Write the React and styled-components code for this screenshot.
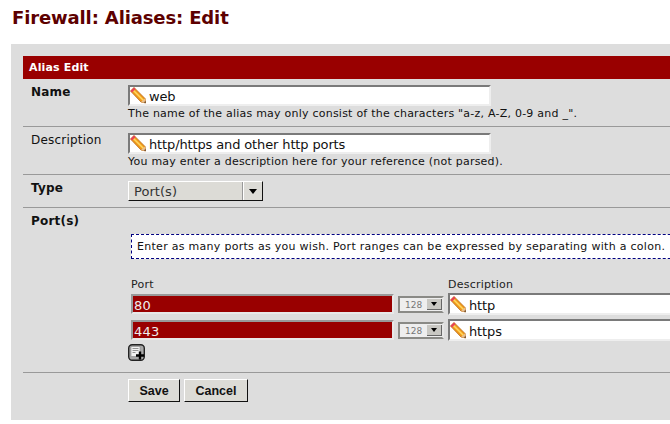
import React from "react";
import styled, { createGlobalStyle } from "styled-components";

const Global = createGlobalStyle`
  html, body { margin: 0; padding: 0; background: #fff; overflow: hidden; }
  body { font-family: "DejaVu Sans", sans-serif; color: #111; }
`;
const Page = styled.div`width: 670px; height: 424px; overflow: hidden; display: flex; flex-direction: column;`;
const Title = styled.h1`
  margin: 0; height: 44px; padding: 7px 0 0 12px; box-sizing: border-box;
  font-size: 18px; line-height: 22px; font-weight: 700; color: #5d0000; white-space: nowrap; letter-spacing: -0.13px;
`;
const Panel = styled.section`
  margin-left: 11px; width: 659px; height: 376px; box-sizing: border-box;
  background: #ddd; padding: 12px 0 0 12px; overflow: hidden;
`;
const Bar = styled.div`
  height: 23px; background: #990000; color: #fff; font-size: 11px; font-weight: 700;
  line-height: 23px; padding-left: 6px; letter-spacing: 0.15px;
`;
const Row = styled.div`
  display: flex; height: ${p => p.$h}px; box-sizing: border-box;
  border-bottom: 1px solid #999;
`;
const Label = styled.div`
  width: 105px; flex: none; box-sizing: border-box; padding: ${p => p.$top}px 0 0 8px;
  font-size: 12px; line-height: 14px; font-weight: ${p => (p.$bold ? 700 : 400)}; color: #111;
  letter-spacing: 0.2px;
`;
const Value = styled.div`
  flex: 1; min-width: 0; padding-top: ${p => p.$top}px; display: flex; flex-direction: column; align-items: flex-start;
`;
const TextBox = styled.div`
  width: ${p => p.$w}px; height: ${p => p.$h || 21}px; box-sizing: border-box; flex: none; background: #fff;
  border-style: solid; border-width: 2px;
  border-color: #7a7a7a #eee #eee #7a7a7a; display: flex; align-items: center;
  font-size: 13px; line-height: 19px; color: #111; white-space: nowrap; overflow: hidden; letter-spacing: -0.13px;
`;
const InputText = styled.span`position: relative; top: 1px;`;
const Hint = styled.div`font-size: 11px; line-height: 13px; color: #111; white-space: nowrap; margin-top: 1px; letter-spacing: 0.23px;`;
const Select = styled.div`
  width: 135px; height: 20px; box-sizing: border-box; background: #dcdbd6;
  border-style: solid; border-width: 1px; border-color: #fff #111 #111 #fff;
  display: flex; align-items: center; font-size: 13px; color: #333; padding-left: 5px;
`;
const SelectText = styled.span`flex: 1; letter-spacing: 0.05px;`;
const SelectArrow = styled.span`
  width: 19px; height: 100%; box-sizing: border-box; border-left: 1px solid #fff;
  box-shadow: -1px 0 0 #999; display: flex; align-items: center; justify-content: center;
`;
const Tri = styled.i`
  display: block; width: 0; height: 0; border-left: 4px solid transparent; border-right: 4px solid transparent;
  border-top: 5px solid #000;
`;
const Notice = styled.div`
  margin: 26px 0 0 3px; width: 620px; height: 25px; box-sizing: border-box; flex: none;
  background: #fff; border: 1px dashed #000080; border-right: none;
  padding-left: 5px; font-size: 11px; line-height: 23px; color: #111; white-space: nowrap; letter-spacing: 0.285px;
`;
const PortGrid = styled.div`
  margin: 19px 0 0 3px; display: grid; grid-template-columns: 263px 46px 300px; column-gap: 4px; row-gap: 4px;
  align-items: center; width: 640px; flex: none;
`;
const ColHead = styled.div`font-size: 11px; line-height: 13px; color: #222; height: 11px; grid-column: ${p => p.$col}; letter-spacing: 0.22px;`;
const RedInput = styled.div`
  height: 20px; box-sizing: border-box; background: #990000; color: #eee;
  border-style: solid; border-width: 2px; border-color: #999 #e8e8e8 #e8e8e8 #999;
  font-size: 13px; line-height: 19px; padding-left: 1px; letter-spacing: 0.2px;
`;
const MiniSelect = styled.div`
  height: 17px; box-sizing: border-box; background: #eee; border-style: solid; border-width: 2px;
  border-color: #8a8a86 #e6e6e6 #8a8a86 #8a8a86; margin-top: 1px;
  display: flex; align-items: center; font-size: 9px; color: #777; padding-left: 5px; justify-content: space-between;
`;
const MiniArrow = styled.span`
  width: 15px; height: 11px; background: #c9c8c3; display: flex; align-items: center; justify-content: center;
  border-right: 1px solid #666; border-bottom: 1px solid #666; box-sizing: border-box;
`;
const SmallTri = styled(Tri)`border-left-width: 3px; border-right-width: 3px; border-top-width: 4px;`;
const AddButton = styled.button`
  display: block; width: 17px; height: 17px; padding: 0; margin: 3px 0 0 0; border: none; background: none; flex: none;
`;
const Actions = styled.div`display: flex; gap: 4px; padding: 6px 0 0 105px;`;
const Btn = styled.button`
  height: 23px; width: ${p => p.$w}px; box-sizing: border-box; background: #dcdbd6; padding: 0;
  border-style: solid; border-width: 1px; border-color: #fff #111 #111 #fff;
  font-family: "Liberation Sans", sans-serif; font-weight: 700; font-size: 12.5px; color: #111;
`;

const Pencil = () => (
  <svg width="16" height="17" viewBox="0 0 16 17" style={{ flex: "none", marginRight: 3 }}>
    <path d="M0.5 4 L4 0.5 L15 11.5 L15.8 16 L11 15 Z" fill="#f09a1a" stroke="#b86a1c" strokeWidth="0.8" />
    <path d="M3 3 L13.5 13.5" stroke="#ffd860" strokeWidth="1.6" />
    <path d="M0.5 4 L4 0.5 L5.5 2 L2 5.5 Z" fill="#e8405a" />
    <path d="M11 15 L15 11.5 L15.8 16 Z" fill="#e8c090" />
    <path d="M14 15.6 L15.8 16 L15.4 14 Z" fill="#4a2a10" />
  </svg>
);
const AddIcon = () => (
  <svg width="17" height="17" viewBox="0 0 17 17">
    <rect x="0.7" y="0.7" width="15.6" height="15.6" rx="3.5" fill="#a8a8a8" stroke="#222" strokeWidth="1.4" />
    <rect x="3" y="2.5" width="9" height="10" fill="#f2f2f2" stroke="#888" strokeWidth="0.6" />
    <path d="M4.5 4.5h6M4.5 6.5h6M4.5 8.5h3" stroke="#888" strokeWidth="0.9" />
    <path d="M12 7.5v8M8 11.5h8" stroke="#000" strokeWidth="2.4" />
  </svg>
);
const Field = ({ w, h, children }) => <TextBox $w={w} $h={h}><Pencil /><InputText>{children}</InputText></TextBox>;
const Mini = () => <MiniSelect>128<MiniArrow><SmallTri /></MiniArrow></MiniSelect>;

export default function App() {
  return (
    <Page>
      <Global />
      <Title>Firewall: Aliases: Edit</Title>
      <Panel>
        <Bar>Alias Edit</Bar>
        <Row $h={48}>
          <Label $bold $top={6}>Name</Label>
          <Value $top={6}>
            <Field w={363}>web</Field>
            <Hint>The name of the alias may only consist of the characters "a-z, A-Z, 0-9 and _".</Hint>
          </Value>
        </Row>
        <Row $h={48}>
          <Label $top={6}>Description</Label>
          <Value $top={6}>
            <Field w={363}>http/https and other http ports</Field>
            <Hint>You may enter a description here for your reference (not parsed).</Hint>
          </Value>
        </Row>
        <Row $h={33}>
          <Label $bold $top={6}>Type</Label>
          <Value $top={6}>
            <Select><SelectText>Port(s)</SelectText><SelectArrow><Tri /></SelectArrow></Select>
          </Value>
        </Row>
        <Row $h={165}>
          <Label $bold $top={6}>Port(s)</Label>
          <Value $top={0}>
            <Notice>Enter as many ports as you wish. Port ranges can be expressed by separating with a colon.</Notice>
            <PortGrid>
              <ColHead $col="1">Port</ColHead>
              <ColHead $col="2" />
              <ColHead $col="3">Description</ColHead>
              <RedInput>80</RedInput><Mini /><Field w={300} h={22}>http</Field>
              <RedInput>443</RedInput><Mini /><Field w={300} h={22}>https</Field>
            </PortGrid>
            <AddButton aria-label="add"><AddIcon /></AddButton>
          </Value>
        </Row>
        <Actions>
          <Btn $w={52}>Save</Btn>
          <Btn $w={64}>Cancel</Btn>
        </Actions>
      </Panel>
    </Page>
  );
}
